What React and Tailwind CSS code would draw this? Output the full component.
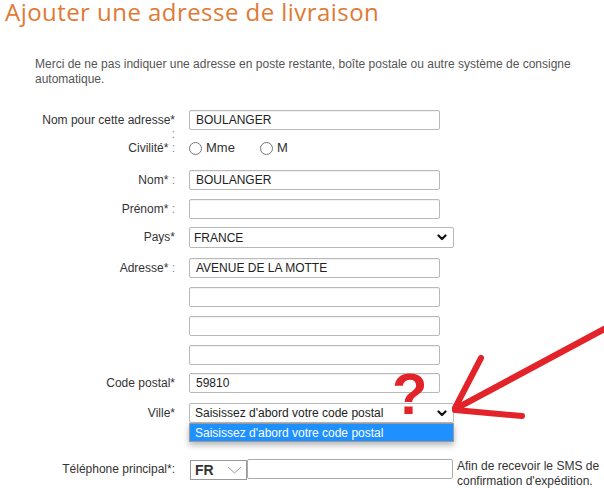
import React from 'react';

function Chevron({ className = '' }) {
  return (
    <svg width="10" height="7" viewBox="0 0 10 7" className={className}>
      <polyline points="1.5,1.5 5,5 8.5,1.5" fill="none" stroke="#111" strokeWidth="2.2" strokeLinecap="round" strokeLinejoin="round" />
    </svg>
  );
}

function Row({ label, colon, className = '', children }) {
  return (
    <div className={`flex items-start ${className}`}>
      <div className="w-[136px] h-[20px] shrink-0 text-right pt-[3px] leading-[14px] text-[#333]">
        {label}
        {colon && <span className="text-[#888]"> :</span>}
      </div>
      <div className="ml-[14px]">{children}</div>
    </div>
  );
}

function TextBox({ value = '' }) {
  return (
    <div className="w-[251px] h-[20px] border border-[#b9b9b9] rounded-[2px] px-[6px] flex items-center text-[#222] bg-white shadow-[inset_0_1px_1px_rgba(0,0,0,0.06)]">
      {value}
    </div>
  );
}

function Radio({ label }) {
  return (
    <div className="flex items-center">
      <span className="w-[13px] h-[13px] rounded-full border border-[#777] bg-white" />
      <span className="ml-[4px] text-[#333] text-[13px]">{label}</span>
    </div>
  );
}

export default function App() {
  return (
    <div className="relative w-[604px] h-[488px] overflow-hidden bg-white font-['Liberation_Sans',Arial,sans-serif] text-[12px]">
      {/* TITLE */}
      <h1 className="-mt-[3px] pl-[5px] font-['Open_Sans',sans-serif] font-medium text-[24px] leading-[30px] tracking-[0.45px] text-[#df7a35] whitespace-nowrap">
        Ajouter une adresse de livraison
      </h1>

      <p className="mt-[30px] ml-[35px] w-[560px] leading-[15px] text-[#555]">
        Merci de ne pas indiquer une adresse en poste restante, boîte postale ou autre système de consigne automatique.
      </p>

      {/* FORM */}
      <div className="ml-[39px] mt-[23px]">
        <Row label="Nom pour cette adresse*" colon>
          <TextBox value="BOULANGER" />
        </Row>

        <Row label="Civilité*" colon className="mt-[8px]">
          <div className="h-[20px] flex items-center gap-[25px]">
            <Radio label="Mme" />
            <Radio label="M" />
          </div>
        </Row>

        <Row label="Nom*" colon className="mt-[12px]">
          <TextBox value="BOULANGER" />
        </Row>

        <Row label="Prénom*" colon className="mt-[9px]">
          <TextBox />
        </Row>

        <Row label="Pays*" className="mt-[8px]">
          <div className="w-[265px] h-[21px] border border-[#b9b9b9] rounded-[2px] pl-[4px] pr-[6px] flex items-center justify-between text-[#222] bg-white">
            <span>FRANCE</span>
            <Chevron />
          </div>
        </Row>

        <Row label="Adresse*" colon className="mt-[10px]">
          <TextBox value="AVENUE DE LA MOTTE" />
        </Row>

        <Row label="" className="mt-[9px]">
          <TextBox />
        </Row>
        <Row label="" className="mt-[9px]">
          <TextBox />
        </Row>
        <Row label="" className="mt-[9px]">
          <TextBox />
        </Row>

        <Row label="Code postal*" className="mt-[8px]">
          <TextBox value="59810" />
        </Row>

        <Row label="Ville*" className="mt-[10px]">
          <div className="relative">
            <div className="w-[265px] h-[20px] border border-[#b9b9b9] rounded-[2px] pl-[5px] pr-[6px] flex items-center justify-between text-[#222] bg-white">
              <span>Saisissez d'abord votre code postal</span>
              <Chevron />
            </div>
            {/* open dropdown */}
            <div className="absolute left-0 top-full w-[265px] border border-[#9a9a9a] bg-white shadow-[0_3px_6px_rgba(0,0,0,0.3)] z-10">
              <div className="h-[17px] bg-[#1e90ff] text-white pl-[5px] flex items-center">
                Saisissez d'abord votre code postal
              </div>
            </div>
          </div>
        </Row>

        <Row label="Téléphone principal*:" className="mt-[36px]">
          <div className="flex items-start">
            <div className="ml-[1px] mt-[1px] w-[57px] h-[20px] border border-[#999] bg-white flex items-center pl-[4px] pr-[4px] justify-between">
              <span className="font-bold text-[14px] text-[#333]">FR</span>
              <svg width="15" height="8" viewBox="0 0 15 8">
                <polyline points="1,1 7.5,7 14,1" fill="none" stroke="#999" strokeWidth="1" />
              </svg>
            </div>
            <div className="w-[206px] h-[20px] border border-[#aaa] rounded-[2px] bg-white" />
            <div className="ml-[4px] leading-[15px] text-[#333] whitespace-nowrap">
              Afin de recevoir le SMS de
              <br />
              confirmation d'expédition.
            </div>
          </div>
        </Row>
      </div>

      {/* red annotation */}
      <svg className="absolute left-0 top-0 pointer-events-none z-20" width="604" height="488" viewBox="0 0 604 488">
        <g fill="none" stroke="#e3232a" strokeLinecap="round" strokeLinejoin="round">
          <path d="M608 327 L457 408" strokeWidth="6.5" />
          <path d="M481 358 L455 408" strokeWidth="6" />
          <path d="M455 410 L522 416" strokeWidth="6" />
        </g>
      </svg>
      <span className="absolute left-[392px] top-[365px] z-20 text-[58px] font-bold leading-none text-[#e3232a] font-['Liberation_Sans',Arial,sans-serif]">
        ?
      </span>
    </div>
  );
}
